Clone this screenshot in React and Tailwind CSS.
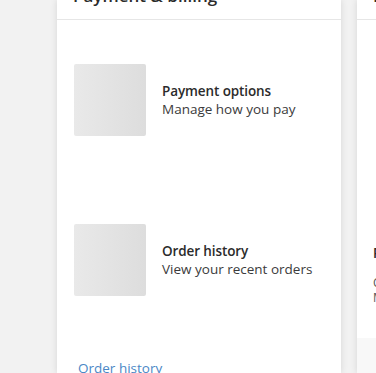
import React from 'react';

const font = { fontFamily: '"Open Sans", "Noto Sans", sans-serif' };

const Item = ({ title, subtitle }) => (
    <div className="h-[160px] shrink-0 flex items-center pl-[17px] gap-[16px]">
        <div className="w-[72px] h-[72px] rounded-[2px] bg-gradient-to-r from-[#e9e9e9] to-[#dddddd] shrink-0" />
        <div className="leading-[18px]">
            <div className="text-[13.5px] font-semibold text-[#2b2b2b] tracking-[-0.1px]">{title}</div>
            <div className="text-[13.5px] text-[#3b3b3b] tracking-[0px]">{subtitle}</div>
        </div>
    </div>
);

export default function App() {
    return (
        <div className="h-[373px] w-[376px] overflow-hidden bg-[#f2f2f2] flex gap-[16px] pl-[57px]" style={font}>
            <div className="w-[284px] shrink-0 bg-white shadow-[0_0_7px_rgba(0,0,0,0.12)] flex flex-col">
                <div className="h-[20px] shrink-0 border-b border-[#e6e6e6] relative overflow-hidden">
                    <div className="absolute left-[16px] bottom-[12px] text-[17px] font-semibold text-[#2b2b2b] leading-[22px] whitespace-nowrap">
                        Payment &amp; billing
                    </div>
                </div>
                <Item title="Payment options" subtitle="Manage how you pay" />
                <Item title="Order history" subtitle="View your recent orders" />
                <div className="shrink-0 pl-[21px] pt-[19px] text-[13.5px] leading-[18px] text-[#4a87c6]">Order history</div>
            </div>
            <div className="w-[220px] shrink-0 bg-white shadow-[0_0_7px_rgba(0,0,0,0.12)] flex flex-col">
                <div className="h-[20px] shrink-0 border-b border-[#e6e6e6] relative overflow-hidden">
                    <div className="absolute left-[16px] bottom-[12px] text-[17px] font-semibold text-[#2b2b2b] leading-[22px] whitespace-nowrap">
                        Privacy
                    </div>
                </div>
                <div className="h-[318px] shrink-0 flex flex-col justify-end pl-[16px] pb-[33px]">
                    <div className="text-[13.5px] font-semibold text-[#2b2b2b] leading-[18px]">Privacy settings</div>
                    <div className="text-[12px] text-[#555] leading-[15px] mt-[13px]">Control your data</div>
                    <div className="text-[12px] text-[#555] leading-[15px]">Manage settings</div>
                </div>
                <div className="flex-1 bg-[#f8f8f8]" />
            </div>
        </div>
    );
}
